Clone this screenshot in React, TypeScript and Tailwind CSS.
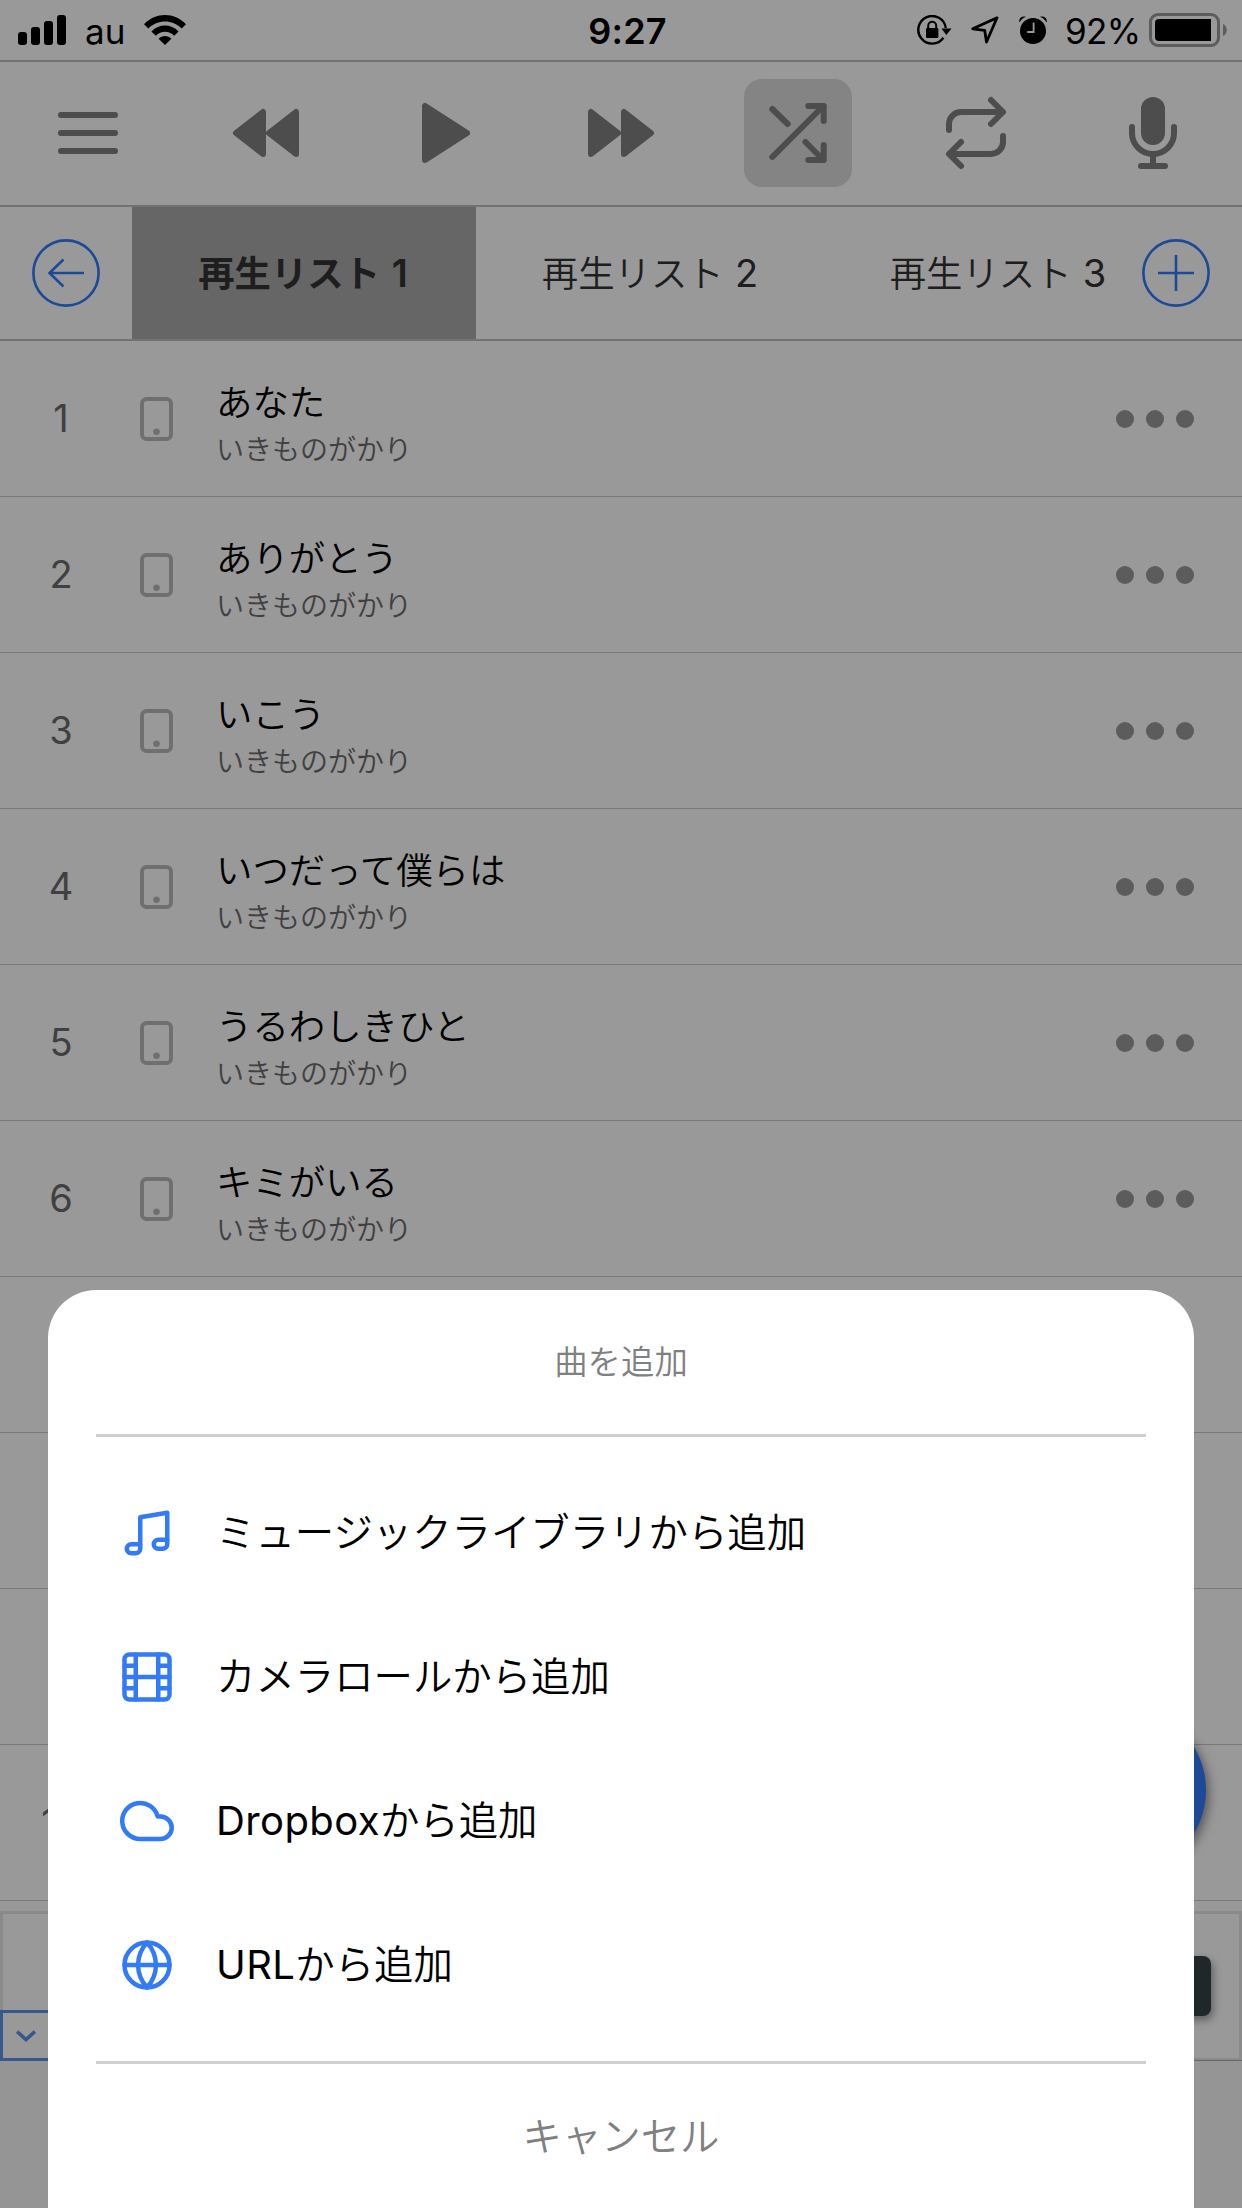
import React from "react";

type Song = { no: number; title?: string; artist?: string };

const ARTIST = "いきものがかり";

const songs: Song[] = [
  { no: 1, title: "あなた", artist: ARTIST },
  { no: 2, title: "ありがとう", artist: ARTIST },
  { no: 3, title: "いこう", artist: ARTIST },
  { no: 4, title: "いつだって僕らは", artist: ARTIST },
  { no: 5, title: "うるわしきひと", artist: ARTIST },
  { no: 6, title: "キミがいる", artist: ARTIST },
  { no: 7 },
  { no: 8 },
  { no: 9 },
  { no: 10 },
];

function StatusBar() {
  return (
    <div className="flex h-[62px] items-start justify-between border-b-2 border-[#bfbfbf] pl-[18px] pr-[14px] text-black">
      <div className="flex h-[60px] w-[560px] items-center">
        <svg className="h-[30px] w-12" viewBox="0 0 48 30">
          <rect x="0" y="17" width="9" height="13" rx="3" />
          <rect x="13" y="12" width="9" height="18" rx="3" />
          <rect x="26" y="6" width="9" height="24" rx="3" />
          <rect x="39" y="0" width="9" height="30" rx="3" />
        </svg>
        <span className="ml-[19px] mt-[2px] w-[41px] text-[35px] leading-[48px]">au</span>
        <svg className="ml-[18px] h-[30px] w-[42px]" viewBox="0 0 42 30">
          <path d="M0 9.200C12-3 30-3 42 9.200L37.600 13.500C28.500 4.300 13.500 4.300 4.400 13.500Z" />
          <path d="M7.400 16.400C15.200 8.500 26.800 8.500 34.600 16.400L30.200 20.800C25 15.300 17 15.300 11.800 20.800Z" />
          <path d="M14.600 23.700C18.300 20.100 23.700 20.100 27.400 23.700L21 30Z" />
        </svg>
      </div>
      <span className="ml-[9px] mt-[7px] text-[36px] font-semibold leading-[48px] tracking-[0.2px]">9:27</span>
      <div className="flex h-[60px] w-[560px] items-center justify-end">
        <svg className="h-[30px] w-[35px]" viewBox="0 0 35 30" fill="none" stroke="#000">
          <path d="M26.400 22.800A13.800 13.800 0 1 1 28.800 13" strokeWidth="2.400" />
          <path d="M24.500 13.500h10L29.300 20z" fill="#000" stroke="none" />
          <rect x="9" y="13" width="12.400" height="10" rx="1.300" fill="#000" stroke="none" />
          <path d="M11.200 14v-3.200a4 4 0 0 1 8 0V14" strokeWidth="2" />
        </svg>
        <svg className="ml-[19px] h-[28px] w-[28px]" viewBox="0 0 28 28" fill="none" stroke="#000" strokeWidth="2.800" strokeLinejoin="round">
          <path d="M26 1.800L1.800 12.800L13.700 14.300L15.500 26Z" />
        </svg>
        <svg className="ml-[20px] h-[28px] w-[28px]" viewBox="0 0 28 28">
          <circle cx="14" cy="15" r="13" />
          <path d="M0.300 6.500C-0.500 2 3-0.500 7 0.800C4 2 2 4 0.300 6.500ZM27.700 6.500C28.500 2 25-0.500 21 0.800C24 2 26 4 27.700 6.500Z" />
          <path d="M14.600 6.500V16H8.200" fill="none" stroke="#fff" strokeWidth="1.800" />
        </svg>
        <span className="ml-[18px] mt-[2px] w-[74px] whitespace-nowrap text-[35px] leading-[48px] tracking-[-0.6px]">92%</span>
        <svg className="ml-[10px] h-[34px] w-[79px]" viewBox="0 0 79 34">
          <rect x="1.500" y="1.500" width="68" height="31" rx="7.500" fill="none" stroke="#9a9a9a" strokeWidth="3" />
          <path d="M10 6H62V28H10A4 4 0 0 1 6 24V10A4 4 0 0 1 10 6Z" />
          <path d="M74 11C79 13 79 21 74 23Z" fill="#9a9a9a" />
        </svg>
      </div>
    </div>
  );
}

function Tool({ active, children }: { active?: boolean; children: React.ReactNode }) {
  return (
    <button className={active ? "size-[108px] rounded-[18px] bg-[#dcdcdc]" : "size-[108px]"}>
      <svg
        className="size-[108px]"
        viewBox="0 0 108 108"
        fill="none"
        stroke="#808080"
        strokeWidth="6"
        strokeLinecap="round"
        strokeLinejoin="round"
      >
        {children}
      </svg>
    </button>
  );
}

function Toolbar() {
  return (
    <div className="flex h-[145px] items-start justify-between border-b-2 border-[#bfbfbf] pl-[34px] pr-[35px] pt-[17px]">
      <Tool>
        <path d="M27 36H81M27 54H81M27 72H81" />
      </Tool>
      <Tool>
        <path d="M24 54L51 33V75ZM57 54L84 33V75Z" fill="#808080" />
      </Tool>
      <Tool>
        <path d="M36 27V81L78 54Z" fill="#808080" />
      </Tool>
      <Tool>
        <path d="M24 33V75L51 54ZM57 33V75L84 54Z" fill="#808080" />
      </Tool>
      <Tool active>
        <path d="M28.300 30L43.700 45M28.300 78L79.300 27M61.500 63L79.300 81" />
        <path d="M64.300 27H79.700V42M64.300 81H79.700V66" />
      </Tool>
      <Tool>
        <path d="M27 51V45A12 12 0 0 1 39 33H80M69 21L81 33L69 45" />
        <path d="M81 57V63A12 12 0 0 1 69 75H28M39 63L27 75L39 87" />
      </Tool>
      <Tool>
        <rect x="42" y="18" width="24" height="48" rx="12" fill="#808080" stroke="none" />
        <path d="M33 48V54A21 21 0 0 0 75 54V48M54 75V87M42 87H66" />
      </Tool>
    </div>
  );
}

function Tabs() {
  return (
    <div className="flex h-[134px] items-stretch border-b-2 border-[#bfbfbf] text-[36.4px] text-[#333]">
      <button className="flex w-[132px] shrink-0 items-center justify-center">
        <svg className="size-[68px]" viewBox="0 0 68 68" fill="none" stroke="#2f7bfd" strokeWidth="2.600">
          <circle cx="34" cy="34" r="32.600" />
          <path d="M52 34H17.500M31.500 20.500L17.500 34L31.500 47.500" />
        </svg>
      </button>
      <div className="flex w-[978px] shrink-0 overflow-hidden whitespace-nowrap font-[350]">
        <button className="w-[344px] shrink-0 bg-[#aaa] pr-[2px] font-bold [word-spacing:3px]">
          再生リスト <span className="text-[38px] font-semibold">1</span>
        </button>
        <button className="w-[348px] shrink-0 [word-spacing:1px]">
          再生リスト <span className="text-[38px] font-normal">2</span>
        </button>
        <button className="w-[348px] shrink-0 [word-spacing:1px]">
          再生リスト <span className="text-[38px] font-normal">3</span>
        </button>
      </div>
      <button className="flex w-[132px] shrink-0 items-center justify-center">
        <svg className="size-[68px]" viewBox="0 0 68 68" fill="none" stroke="#2f7bfd" strokeWidth="2.600">
          <circle cx="34" cy="34" r="32.600" />
          <path d="M34 16V52M16 34H52" />
        </svg>
      </button>
    </div>
  );
}

function SongRow({ song }: { song: Song }) {
  return (
    <div className="flex h-[156px] items-center border-b border-[#c8c8c8]">
      <span className="w-[122px] text-center text-[38px] text-[#6b6b6b]">{song.no}</span>
      {song.title && (
        <>
          <svg className="ml-[18px] h-[44px] w-[33px]" viewBox="0 0 33 44">
            <rect x="2" y="2" width="29" height="40" rx="4.500" fill="none" stroke="#bababa" strokeWidth="4" />
            <circle cx="16.500" cy="34.700" r="3.300" fill="#bababa" />
          </svg>
          <div className="ml-[43px] flex-1 pt-[15px] font-[350]">
            <div className="text-[36.4px] leading-[47px] text-black">{song.title}</div>
            <div className="text-[28px] leading-[46px] text-[#6b6b6b]">{song.artist}</div>
          </div>
          <div className="flex gap-3 pr-12">
            <i className="size-[18px] rounded-full bg-[#999]" />
            <i className="size-[18px] rounded-full bg-[#999]" />
            <i className="size-[18px] rounded-full bg-[#999]" />
          </div>
        </>
      )}
    </div>
  );
}

function AdBanner() {
  return (
    <div className="pt-[10px]">
      <div className="relative h-[150px] border-x-[3px] border-t-[3px] border-[#e6e6e6] bg-white">
        <div className="absolute -inset-x-[3px] bottom-0 h-[3px] border-b border-[#aaa] bg-[#e6e6e6]" />
        <div className="absolute right-[28px] top-[42px] h-[60px] w-[120px] rounded-[8px] bg-[#344146] shadow-[2px_4px_8px_rgba(0,0,0,0.4)]" />
        <div className="absolute -left-[3px] bottom-0 flex h-[51px] w-[52px] items-center justify-center border-[3px] border-[#5a93e6] bg-white">
          <svg className="h-[12px] w-5" viewBox="0 0 20 12" fill="none" stroke="#5a93e6" strokeWidth="3.600">
            <path d="M1 1.500L10 9.500L19 1.500" />
          </svg>
        </div>
      </div>
    </div>
  );
}

function SheetItem({ latin, label, children }: { latin?: string; label: string; children: React.ReactNode }) {
  return (
    <button className="flex h-36 items-center pl-[72px] text-left text-[39.400px] text-black">
      <svg
        className="mr-[42px] size-[54px]"
        viewBox="0 0 24 24"
        fill="none"
        stroke="#337af6"
        strokeWidth="2"
        strokeLinecap="round"
        strokeLinejoin="round"
      >
        {children}
      </svg>
      <span className={latin ? "font-[350]" : "pt-[2px] font-[350]"}>
        {latin && <span className="text-[40px] font-normal tracking-[0.4px]">{latin}</span>}
        {label}
      </span>
    </button>
  );
}

function AddSheet() {
  return (
    <div className="absolute inset-x-12 bottom-0 flex h-[918px] flex-col rounded-t-[48px] bg-white">
      <div className="flex h-36 items-center justify-center pt-px text-[33.4px] font-[350] text-[#808080]">曲を追加</div>
      <div className="mx-12 h-[3px] bg-[#cfcfcf]" />
      <div className="flex flex-col py-6">
        <SheetItem label="ミュージックライブラリから追加">
          <path d="M9 17H5a2 2 0 0 0-2 2 2 2 0 0 0 2 2h2a2 2 0 0 0 2-2zm12-2h-4a2 2 0 0 0-2 2 2 2 0 0 0 2 2h2a2 2 0 0 0 2-2z" />
          <path d="M9 17V5L21 3V15" />
        </SheetItem>
        <SheetItem label="カメラロールから追加">
          <rect x="2" y="2" width="20" height="20" rx="2.180" />
          <path d="M7 2V22M17 2V22M2 12H22M2 7H7M2 17H7M17 17H22M17 7H22" />
        </SheetItem>
        <SheetItem latin="Dropbox" label="から追加">
          <path d="M18 10h-1.260A8 8 0 1 0 9 20h9a5 5 0 0 0 0-10z" />
        </SheetItem>
        <SheetItem latin="URL" label="から追加">
          <circle cx="12" cy="12" r="10" />
          <path d="M2 12H22M12 2a15.300 15.300 0 0 1 4 10 15.300 15.300 0 0 1-4 10 15.300 15.300 0 0 1-4-10 15.300 15.300 0 0 1 4-10z" />
        </SheetItem>
      </div>
      <div className="mx-12 h-[3px] bg-[#cfcfcf]" />
      <button className="h-36 pt-[3px] text-[39.4px] font-[350] text-[#808080]">キャンセル</button>
    </div>
  );
}

export default function App() {
  return (
    <div className="relative h-[2208px] w-[1242px] overflow-hidden bg-[#f8f8f8] font-['Inter','Noto_Sans_CJK_JP',sans-serif]">
      <div className="bg-white">
        <StatusBar />
        <Toolbar />
        <Tabs />
        {songs.map((song) => (
          <SongRow key={song.no} song={song} />
        ))}
        <AdBanner />
      </div>
      <div className="absolute right-9 top-[1706px] size-[168px] rounded-full bg-[#2f7bfd] shadow-[2px_4px_12px_rgba(0,0,0,0.5)]" />
      <div className="absolute inset-0 bg-black/40" />
      <AddSheet />
    </div>
  );
}
